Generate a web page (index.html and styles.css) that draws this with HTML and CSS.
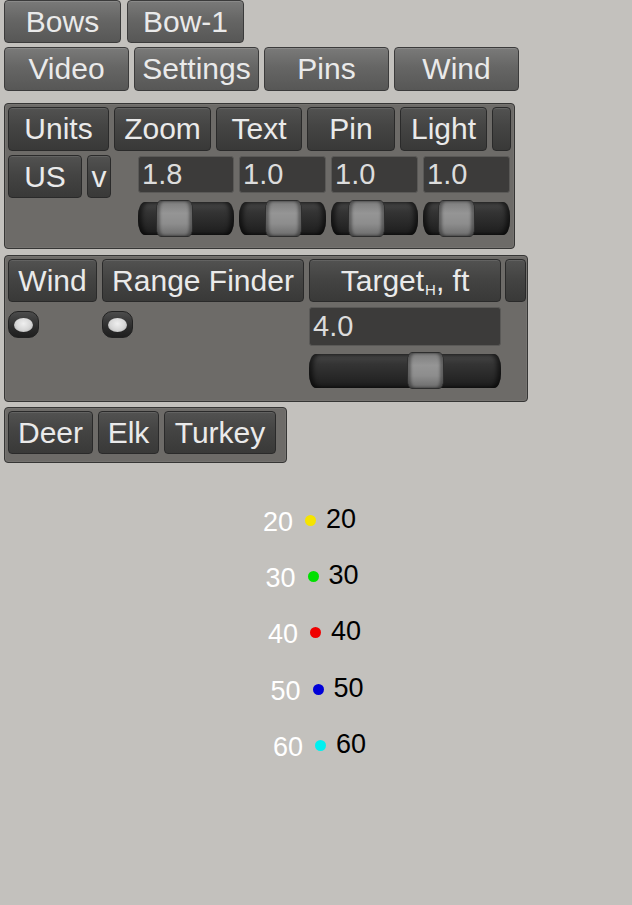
FILE: index.html
```html
<!DOCTYPE html>
<html>
<head>
<meta charset="utf-8">
<link rel="stylesheet" href="styles.css">
</head>
<body>
<div class="screen">
  <div class="row r1">
    <div class="btn lt w117">Bows</div>
    <div class="btn lt w117">Bow-1</div>
  </div>
  <div class="row r2">
    <div class="btn lt w125">Video</div>
    <div class="btn lt w125">Settings</div>
    <div class="btn lt w125">Pins</div>
    <div class="btn lt w125">Wind</div>
  </div>

  <div class="panel p1">
    <div class="row prow">
      <div class="btn dk w-units">Units</div>
      <div class="btn dk w-zoom">Zoom</div>
      <div class="btn dk w-text">Text</div>
      <div class="btn dk w-pin">Pin</div>
      <div class="btn dk w-light">Light</div>
      <div class="btn dk w-small"></div>
    </div>
    <div class="row p1b">
      <div class="btn dk w-us">US</div>
      <div class="btn dk w-v">v</div>
      <div class="sliders">
        <div class="field">1.8</div>
        <div class="field">1.0</div>
        <div class="field">1.0</div>
        <div class="field">1.0</div>
        <div class="slider"><div class="thumb" style="margin-left:18px"></div></div>
        <div class="slider"><div class="thumb" style="margin-left:26px"></div></div>
        <div class="slider"><div class="thumb" style="margin-left:17px"></div></div>
        <div class="slider"><div class="thumb" style="margin-left:15px"></div></div>
      </div>
    </div>
  </div>

  <div class="panel p2">
    <div class="p2grid">
      <div class="btn dk">Wind</div>
      <div class="btn dk">Range Finder</div>
      <div class="btn dk">Target<span class="sub">H</span>, ft</div>
      <div class="btn dk"></div>
      <div class="ledcell"><div class="led"><div class="ledin"></div></div></div>
      <div class="ledcell"><div class="led"><div class="ledin"></div></div></div>
      <div class="tcol">
        <div class="field tfield">4.0</div>
        <div class="slider tslider"><div class="thumb" style="margin-left:98px"></div></div>
      </div>
    </div>
  </div>

  <div class="panel p3">
    <div class="row prow">
      <div class="btn dk w-deer">Deer</div>
      <div class="btn dk w-elk">Elk</div>
      <div class="btn dk w-turkey">Turkey</div>
    </div>
  </div>

  <div class="pins">
    <div class="pinrow" style="margin-left:0px"><span class="wn">20</span><span class="dot" style="background:#f5e400"></span><span class="bn">20</span></div>
    <div class="pinrow" style="margin-left:2.5px"><span class="wn">30</span><span class="dot" style="background:#00e000"></span><span class="bn">30</span></div>
    <div class="pinrow" style="margin-left:5px"><span class="wn">40</span><span class="dot" style="background:#f00000"></span><span class="bn">40</span></div>
    <div class="pinrow" style="margin-left:7.5px"><span class="wn">50</span><span class="dot" style="background:#0000d8"></span><span class="bn">50</span></div>
    <div class="pinrow" style="margin-left:10px"><span class="wn">60</span><span class="dot" style="background:#00f0f0"></span><span class="bn">60</span></div>
  </div>
</div>
</body>
</html>
```
FILE: styles.css
```css
html, body {
  margin: 0;
  padding: 0;
}
body {
  background: #c3c1bd;
  font-family: "Liberation Sans", Arial, sans-serif;
  width: 632px;
  height: 905px;
  overflow: hidden;
}
.screen {
  padding-left: 4px;
}
.row {
  display: flex;
}
.r1 {
  gap: 6px;
  height: 43px;
}
.r2 {
  gap: 5px;
  height: 44px;
  margin-top: 4px;
}
.btn {
  box-sizing: border-box;
  display: flex;
  align-items: center;
  justify-content: center;
  font-size: 30px;
  color: #eaeaea;
  border-radius: 4px;
  white-space: nowrap;
  line-height: 1;
}
.lt {
  background: linear-gradient(to bottom, #7a7a79 0%, #666665 45%, #575756 100%);
  border: 1px solid #3b3b3b;
  box-shadow: inset 0 1px 0 rgba(255,255,255,0.12);
}
.dk {
  background: linear-gradient(to bottom, #525251 0%, #444443 45%, #393938 100%);
  border: 1px solid #2a2a2a;
  box-shadow: inset 0 1px 0 rgba(255,255,255,0.1);
}
.w117 { width: 117px; }
.w125 { width: 125px; }

.panel {
  box-sizing: border-box;
  background: #6d6b68;
  border: 1px solid #363635;
  border-radius: 4px;
  padding: 3px;
  box-shadow: inset 0 0 0 1px rgba(255,255,255,0.06);
}
.p1 {
  margin-top: 12px;
  width: 511px;
  height: 146px;
}
.prow {
  gap: 5px;
  height: 44px;
}
.w-units { width: 101px; }
.w-zoom { width: 97px; }
.w-text { width: 86px; }
.w-pin { width: 88px; }
.w-light { width: 87px; }
.w-small { width: 19px; }
.p1b {
  margin-top: 4px;
  align-items: flex-start;
}
.w-us { width: 74px; height: 43px; }
.w-v { width: 24px; height: 43px; margin-left: 5px; }
.sliders {
  margin-left: 27px;
  margin-top: 1px;
  display: grid;
  grid-template-columns: 96px 87px 87px 87px;
  column-gap: 5px;
  row-gap: 7px;
}
.field {
  box-sizing: border-box;
  height: 37px;
  background: #3c3b3a;
  border: 1px solid #5a5957;
  border-radius: 3px;
  color: #dcdcdc;
  font-size: 29px;
  line-height: 35px;
  padding-left: 3px;
}
.slider {
  box-sizing: border-box;
  height: 33px;
  margin-top: 2px;
  border-radius: 7px / 14px;
  background: linear-gradient(to bottom, #474747 0%, #343434 30%, #272727 70%, #1c1c1c 100%);
  box-shadow: inset 4px 0 4px rgba(0,0,0,0.55), inset -4px 0 4px rgba(0,0,0,0.55);
  display: flex;
}
.thumb {
  box-sizing: border-box;
  flex: none;
  width: 37px;
  height: 37px;
  margin-top: -2px;
  border-radius: 5px / 9px;
  border: 1px solid #2e2e2e;
  background: linear-gradient(to bottom, #7c7c7c 0%, #959595 35%, #8d8d8d 65%, #6c6c6c 100%);
  box-shadow: inset 3px 0 3px rgba(0,0,0,0.35), inset -3px 0 3px rgba(0,0,0,0.35);
}

.p2 {
  margin-top: 6px;
  width: 524px;
  height: 147px;
}
.p2grid {
  display: grid;
  grid-template-columns: 89px 202px 192px 20px;
  grid-template-rows: 43px auto;
  column-gap: 5px;
}
.p2grid > .btn:nth-child(4) { margin-left: -1px; }
.sub {
  font-size: 15px;
  align-self: flex-end;
  margin-bottom: 4px;
  margin-left: 1px;
}
.ledcell {
  padding-top: 9px;
}
.led {
  box-sizing: border-box;
  width: 31px;
  height: 27px;
  border-radius: 10px;
  background: linear-gradient(to bottom, #4c4c4c, #2c2c2c 60%, #1f1f1f);
  border: 1px solid #222;
  display: flex;
  align-items: center;
  justify-content: center;
}
.ledin {
  width: 19px;
  height: 14px;
  border-radius: 50%;
  background: radial-gradient(ellipse at 50% 40%, #efefef 0%, #d6d6d6 55%, #a0a0a0 100%);
}
.tcol {
  padding-top: 5px;
  display: flex;
  flex-direction: column;
}
.tfield {
  height: 39px;
  line-height: 37px;
}
.tslider {
  margin-top: 8px;
  height: 34px;
}

.p3 {
  margin-top: 5px;
  width: 283px;
  height: 56px;
}
.p3 .prow { height: 43px; }
.w-deer { width: 85px; }
.w-elk { width: 61px; }
.w-turkey { width: 112px; }

.pins {
  margin-top: 29px;
  margin-left: 259px;
  display: flex;
  flex-direction: column;
}
.pinrow {
  display: flex;
  align-items: center;
  height: 56.4px;
  font-size: 27px;
  line-height: 1;
}
.wn {
  color: #ffffff;
  margin-top: 4px;
}
.dot {
  width: 11px;
  height: 11px;
  border-radius: 50%;
  margin-left: 12px;
}
.bn {
  color: #000;
  margin-left: 10px;
  margin-top: -2px;
}
```
